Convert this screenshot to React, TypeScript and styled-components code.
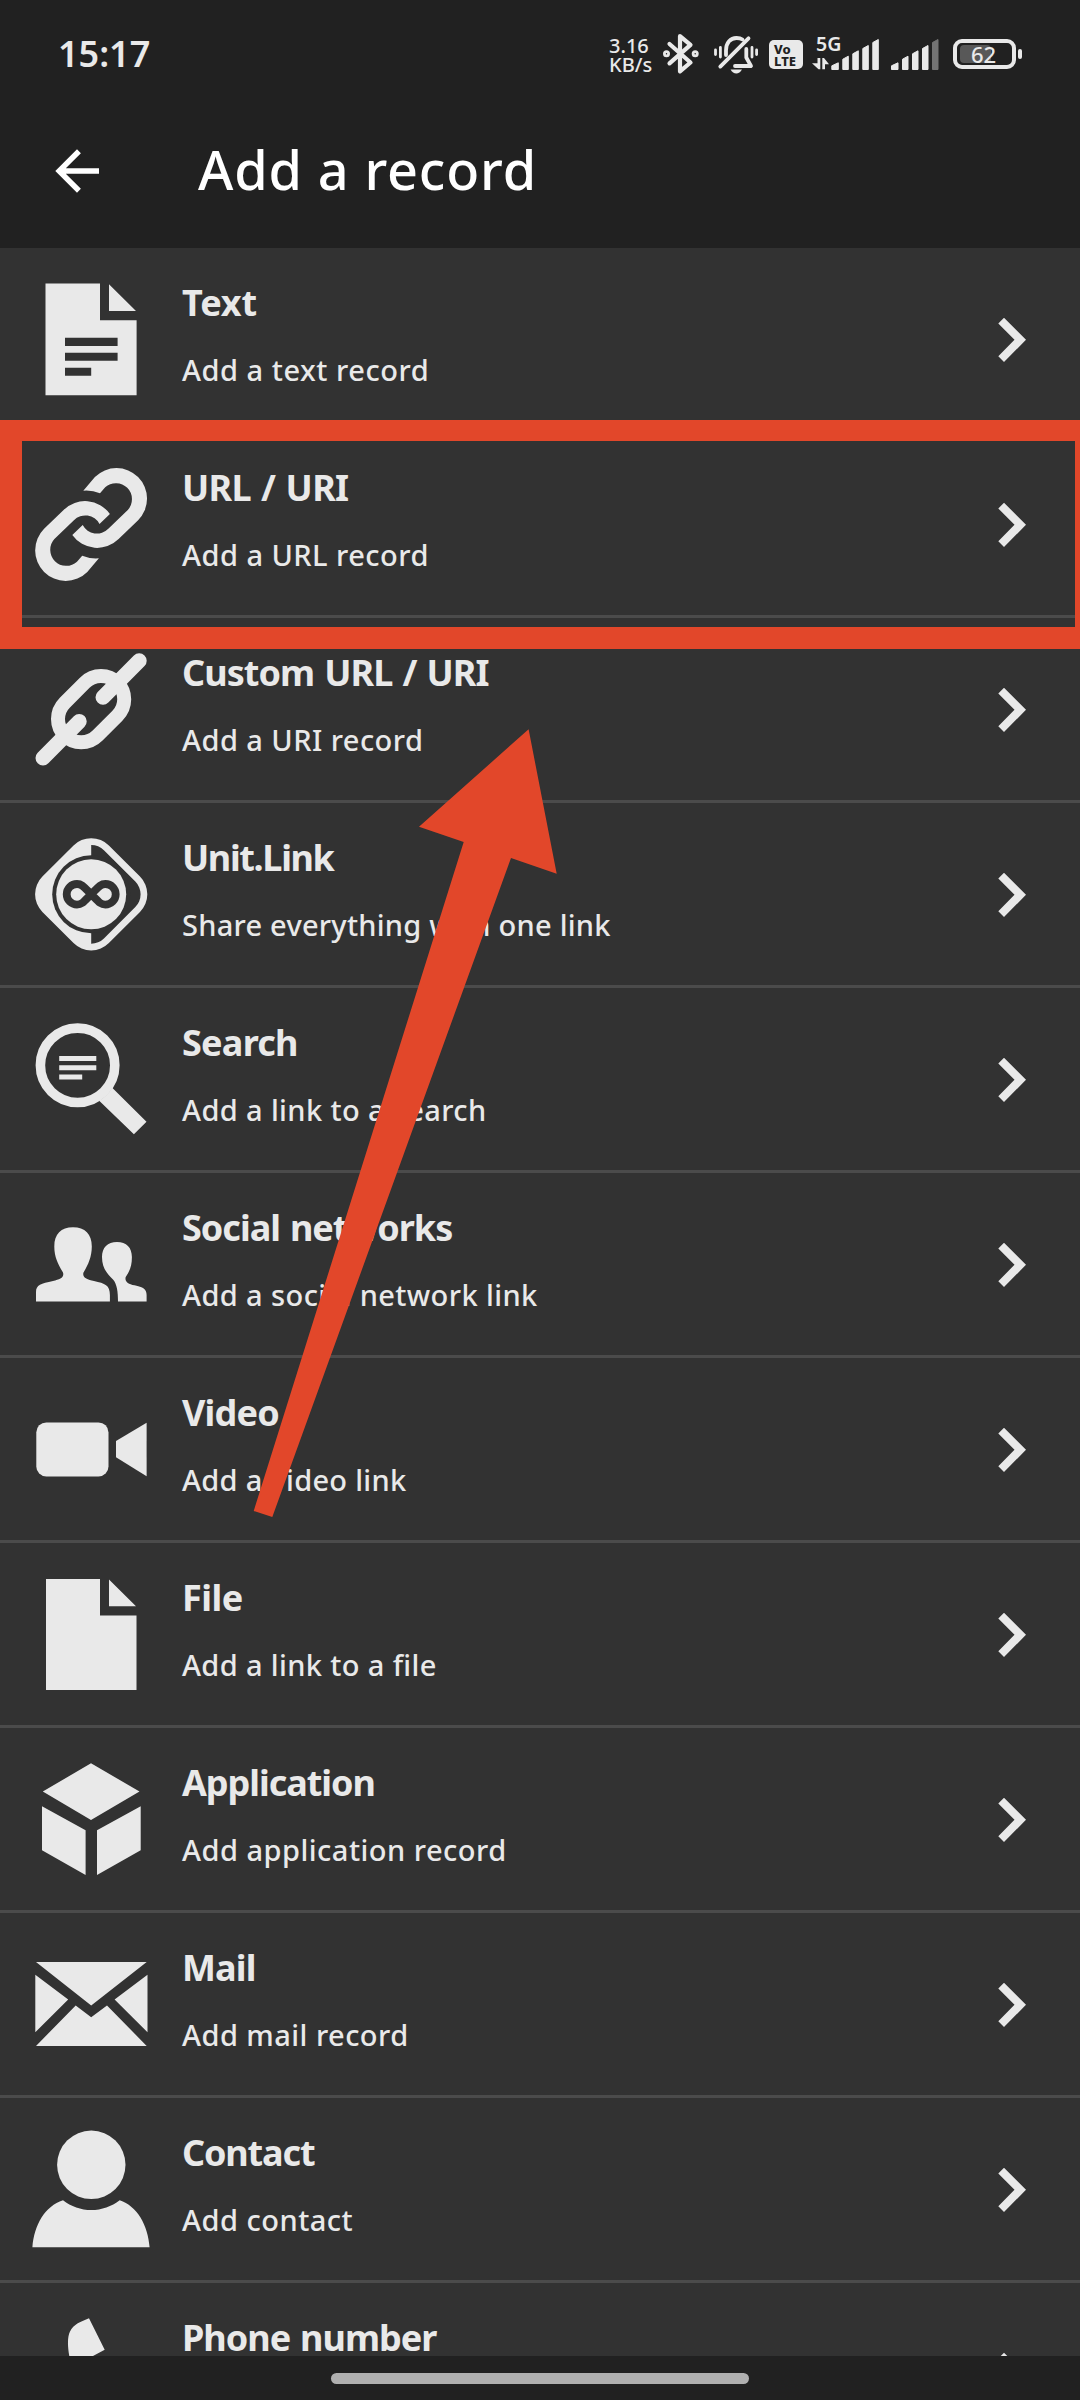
import React from 'react';
import styled, { createGlobalStyle } from 'styled-components';

const INK = '#e9e9e9';
const BAR = '#212121';
const SURFACE = '#323232';
const DIVIDER = '#4b4b4b';
const MARK = '#e2472a';

const Global = createGlobalStyle`
  * { box-sizing: border-box; }
  body { margin: 0; background: ${BAR}; }
`;

const Screen = styled.div`
  position: relative;
  display: flex;
  flex-direction: column;
  width: 1080px;
  height: 2400px;
  overflow: hidden;
  background: ${BAR};
  color: ${INK};
  font-family: 'Noto Sans', sans-serif;
`;

const StatusBar = styled.header`
  display: flex;
  align-items: flex-start;
  justify-content: space-between;
  height: 106px;
  padding: 28px 64px 0 58px;
`;

const Clock = styled.time`
  margin-top: 1px;
  font-size: 36px;
  font-weight: 560;
  line-height: 50px;
`;

const StatusIcons = styled.div`
  display: flex;
  align-items: flex-start;
`;

const NetSpeed = styled.div`
  display: flex;
  flex-direction: column;
  width: 52px;
  margin-top: 9px;
  font-size: 20px;
  font-weight: 500;
  line-height: 18.5px;
`;

const StatusGlyph = styled.svg<{ $w: number; $gap?: number }>`
  display: block;
  flex: none;
  width: ${p => p.$w}px;
  height: 44px;
  margin-top: 4px;
  margin-right: ${p => p.$gap ?? 0}px;
`;

const VolteBadge = styled.div`
  display: flex;
  flex-direction: column;
  align-items: flex-start;
  width: 34px;
  height: 29px;
  margin: 12px 9px 0 10px;
  padding: 3px 0 0 5px;
  border-radius: 5px;
  background: ${INK};
  color: ${BAR};
  font-size: 13px;
  font-weight: 800;
  line-height: 12px;
`;

const Cell = styled.div`
  position: relative;
  width: 68px;
  margin-right: 1px;
`;

const Generation = styled.span`
  position: absolute;
  left: 4px;
  top: 4px;
  font-size: 19.5px;
  font-weight: 600;
  line-height: 24px;
`;

const Battery = styled.div`
  position: relative;
  display: flex;
  align-items: center;
  justify-content: center;
  width: 63px;
  height: 30px;
  margin: 11px 0 0 14px;
  border: 4px solid ${INK};
  border-radius: 9px;

  &::after {
    content: '';
    position: absolute;
    right: -10px;
    top: 6px;
    width: 4px;
    height: 10px;
    border-radius: 2px;
    background: ${INK};
  }
`;

const BatteryLevel = styled.div`
  position: absolute;
  left: 3px;
  top: 2px;
  width: 31px;
  height: 18px;
  border-radius: 4px;
  background: #585858;
`;

const BatteryText = styled.span`
  position: relative;
  margin-right: 2px;
  font-size: 22px;
  font-weight: 500;
  line-height: 22px;
`;

const AppBar = styled.div`
  display: flex;
  align-items: flex-start;
  height: 142px;
  padding: 25px 0 0 51px;
  color: #fff;
`;

const BackIcon = styled.svg`
  width: 52px;
  height: 52px;
  margin: 14px 95px 0 0;
`;

const Title = styled.h1`
  margin: 0;
  font-size: 54px;
  font-weight: 540;
  line-height: 76px;
  letter-spacing: 0.85px;
`;

const List = styled.ul`
  display: flex;
  flex-direction: column;
  height: 2108px;
  margin: 0;
  padding: 0;
  overflow: hidden;
  list-style: none;
  background: ${SURFACE};
`;

const Row = styled.li`
  display: flex;
  flex: none;
  align-items: flex-start;
  height: 185px;
  padding: 30px 52px 0 30px;
  border-bottom: 3px solid ${DIVIDER};
`;

const RowIcon = styled.svg`
  flex: none;
  width: 124px;
  height: 124px;
  margin-right: 28px;
  fill: ${INK};
`;

const RowText = styled.div`
  display: flex;
  flex: 1;
  flex-direction: column;
  gap: 23px;
  padding-top: 1px;
  white-space: nowrap;
`;

const RowTitle = styled.strong<{ $tracking: number }>`
  font-size: 36px;
  font-weight: 680;
  line-height: 48px;
  letter-spacing: ${p => p.$tracking}px;
  word-spacing: 1.6px;
`;

const RowNote = styled.span<{ $tracking: number }>`
  font-size: 29px;
  font-weight: 500;
  line-height: 40px;
  letter-spacing: ${p => p.$tracking}px;
`;

const Chevron = styled.svg`
  flex: none;
  width: 32px;
  height: 48px;
  margin-top: 38px;
  fill: ${INK};
`;

const NavBar = styled.footer`
  display: flex;
  flex: 1;
  justify-content: center;
  padding-top: 17px;
`;

const NavHandle = styled.div`
  width: 418px;
  height: 11px;
  border-radius: 6px;
  background: #b0b0b0;
`;

const Highlight = styled.div`
  position: absolute;
  left: 0;
  top: 420px;
  width: 1080px;
  height: 229px;
  border: solid ${MARK};
  border-width: 21px 5px 22px 22px;
`;

const Pointer = styled.svg`
  position: absolute;
  left: 253px;
  top: 729px;
  width: 305px;
  height: 789px;
  fill: ${MARK};
`;

const SHEET = 'M45.5 35.5H100V72.3H136.6V147.3H45.5ZM109 36.3L136 63H109Z';
const LINK =
  'M83.3 57.7L94.9 44A30.5 30.5 0 0 1 138.1 87.2L118.6 106.1A30.5 30.5 0 0 1 72.3 102L82.7 92A16 16 0 0 0 108.3 95.8L127.8 76.9A16 16 0 0 0 105.2 54.3L100 60.3Q92 57 83.3 57.7Z';

const icons: Record<string, React.ReactNode> = {
  text: (
    <>
      <path d={SHEET} />
      <path fill={SURFACE} d="M65 89.7H117.6V98H65ZM65 104.7H117.6V112.7H65ZM65 119.8H91.2V127.8H65Z" />
    </>
  ),
  link: (
    <>
      <path d={LINK} />
      <path d={LINK} transform="rotate(180 91.1 91.5)" />
    </>
  ),
  chain: (
    <g fill="none" stroke={INK}>
      <rect x="53.9" y="68" width="74.4" height="46.4" rx="23.2" strokeWidth="14" transform="rotate(-45 91.1 91.2)" />
      <path strokeWidth="15" strokeLinecap="round" d="M139.2 42.8L103 79.2M43 140L79.2 103.4" />
    </g>
  ),
  unit: (
    <>
      <rect x="44.2" y="44.3" width="94" height="94" rx="25" transform="rotate(45 91.2 91.3)" />
      <clipPath id="right-half">
        <rect x="91.2" y="30" width="60" height="124" />
      </clipPath>
      <g clipPath="url(#right-half)">
        <rect x="51" y="51.1" width="80.4" height="80.4" rx="18" fill={SURFACE} transform="rotate(45 91.2 91.3)" />
      </g>
      <circle cx="91.2" cy="91.3" r="39" fill={SURFACE} />
      <circle cx="91.2" cy="91.3" r="35" />
      <path
        fill="none"
        stroke={SURFACE}
        strokeWidth="7.8"
        d="M91.2 91.3C84 84 82 81 77 81A10.3 10.3 0 0 0 77 101.6C82 101.6 84 98.6 91.2 91.3C98.4 84 100.4 81 105.4 81A10.3 10.3 0 0 1 105.4 101.6C100.4 101.6 98.4 98.6 91.2 91.3Z"
      />
    </>
  ),
  search: (
    <>
      <circle cx="77.6" cy="77.3" r="37.2" fill="none" stroke={INK} strokeWidth="9.6" />
      <path d="M112.2 99.7L146.5 133.7L133.9 146.3L99.2 112.7Q107 108 112.2 99.7ZM59.2 68H96.3V73H59.2ZM59.2 77.2H96.3V82.2H59.2ZM59.2 86.6H82.2V91.6H59.2Z" />
    </>
  ),
  people: (
    <>
      <path d="M36 128.4V119C36 112 41 110.5 53 108C60 106.5 64.5 104.5 63 99.5C58 91 54.3 84 54.3 73.5C54.3 61 61 54.3 73 54.3C85 54.3 91.8 61 91.8 73.5C91.8 84 88 92 83.5 99.5C82 104.5 87 106.5 94 108C105 110.5 109.9 112 109.9 122V128.4Z" />
      <path d="M118 128.4C118 119 117 111 113 106.5C107 100.5 102 95 102 84C102 74.5 107.5 69 117 69C126.5 69 131.9 74.5 131.9 84C131.9 93 130 97.5 125.7 104C124.5 108.5 128 111 134.5 112.3C143 114 146.6 116 146.6 122V128.4Z" />
    </>
  ),
  video: (
    <>
      <rect x="36.3" y="64.4" width="72.2" height="54" rx="10" />
      <path d="M146.6 64.8V118.2L116 99.2V83Z" />
    </>
  ),
  file: <path d="M46 36H100V72.5H136.5V147H46ZM109 36.5L136 63.3H109Z" />,
  box: (
    <path d="M91 35.3L139.5 63.5L91 92L42.8 63.5ZM42 78.3L85.6 102.3V147L42 122.3ZM97 102.3L140.7 78.3V122.3L97 147Z" />
  ),
  mail: (
    <path d="M36 49H146.7L91.2 92.6ZM35.3 61.8L68.2 86.6L35.3 119.3ZM147.5 61.8L114.6 86.6L147.5 119.3ZM36 133L75.7 92.4L91.2 104.2L107 92.4L146.7 133Z" />
  ),
  contact: (
    <>
      <circle cx="91.3" cy="66.8" r="34.2" />
      <path d="M32.4 149.3C34 127 45 108 63 102.2C71 108.5 81 112 91.3 112C101.6 112 111.6 108.5 119.7 102.2C137 108 148 127 149.6 149.3Z" />
    </>
  ),
  phone: (
    <path d="M89 35.3L104.7 66.7L93 73C90 90 98 110 110 118L121 112L136 139C120 155 100 147 85 122C74 104 69.7 85 69.3 73C67.5 63 67.3 54 70 48.5C73.5 41 81 38.8 89 35.3Z" />
  ),
};

const rows = [
  { icon: 'text', title: 'Text', fit: -0.1, note: 'Add a text record', tracking: 0.53 },
  { icon: 'link', title: 'URL / URI', fit: -0.7, note: 'Add a URL record', tracking: 0.47 },
  { icon: 'chain', title: 'Custom URL / URI', fit: -0.93, note: 'Add a URI record', tracking: 0.45 },
  { icon: 'unit', title: 'Unit.Link', fit: -1.35, note: 'Share everything with one link', tracking: 0.25 },
  { icon: 'search', title: 'Search', fit: -0.75, note: 'Add a link to a search', tracking: 0.38 },
  { icon: 'people', title: 'Social networks', fit: -1, note: 'Add a social network link', tracking: 0.4 },
  { icon: 'video', title: 'Video', fit: -0.8, note: 'Add a video link', tracking: 0.3 },
  { icon: 'file', title: 'File', fit: -0.5, note: 'Add a link to a file', tracking: 0.37 },
  { icon: 'box', title: 'Application', fit: -1.05, note: 'Add application record', tracking: 0.49 },
  { icon: 'mail', title: 'Mail', fit: -0.85, note: 'Add mail record', tracking: 0.46 },
  { icon: 'contact', title: 'Contact', fit: -1.15, note: 'Add contact', tracking: 0.5 },
  { icon: 'phone', title: 'Phone number', fit: -1, note: 'Add phone number', tracking: 0.45 },
];

const barTops = [62.3, 55.7, 50.3, 45, 39];

function SignalBars({ x, full }: { x: number; full: number }) {
  return (
    <>
      {barTops.map((top, i) => {
        const left = i === 0 ? x : x + 1 + i * 10;
        const right = x + 7.5 + i * 10;
        const color = i < full ? INK : '#747474';
        return (
          <path
            key={top}
            fill={color}
            stroke={color}
            strokeLinejoin="round"
            strokeWidth="1"
            d={`M${left + 0.5} 69.5V${top + 3.5}L${right - 0.5} ${top + 0.5}V69.5Z`}
          />
        );
      })}
    </>
  );
}

export default function App() {
  return (
    <Screen>
      <Global />
      <StatusBar>
        <Clock>15:17</Clock>
        <StatusIcons>
          <NetSpeed>
            <span>3.16</span>
            <span>KB/s</span>
          </NetSpeed>
          <StatusGlyph $w={38} $gap={14} viewBox="661 32 38 44" fill="none" stroke={INK} strokeWidth="4.2" strokeLinejoin="round" strokeLinecap="round">
            <path d="M669.5 44L690.5 62.5L680 71.3V36.2L690.5 44.8L669.5 63.3" />
            <circle cx="666.5" cy="53.7" r="1.4" />
            <circle cx="695.2" cy="53.7" r="1.4" />
          </StatusGlyph>
          <StatusGlyph $w={46} viewBox="713 32 46 44" fill="none" stroke={INK} strokeWidth="3.8" strokeLinecap="round" strokeLinejoin="round">
            <path d="M726 55V50.5C726 42.5 730.5 38 736.5 38C739 38 741 38.5 742.5 39.5M746.3 49V57.5L751 66H735" />
            <path d="M720.3 66.6L748.5 38.3" />
            <path strokeWidth="2.8" d="M715.5 50V54.5M720.4 47.5V57M752 47.5V57M756.6 50V54.5" />
            <path fill={INK} stroke="none" d="M730.5 69.5H742C740.5 72.3 738.5 73.4 736.3 73.4C734 73.4 732 72.3 730.5 69.5Z" />
          </StatusGlyph>
          <VolteBadge>
            <span>Vo</span>
            <span>LTE</span>
          </VolteBadge>
          <Cell>
            <Generation>5G</Generation>
            <StatusGlyph $w={68} viewBox="812 32 68 44">
              <SignalBars x={831.3} full={5} />
              <path fill={INK} d="M817.5 58H820.3V69.3H818.5L812 63.3H817.5ZM822.3 58H824L829 64.2H825V69.3H822.3Z" />
            </StatusGlyph>
          </Cell>
          <StatusGlyph $w={58} viewBox="881 32 58 44">
            <SignalBars x={891} full={4} />
          </StatusGlyph>
          <Battery>
            <BatteryLevel />
            <BatteryText>62</BatteryText>
          </Battery>
        </StatusIcons>
      </StatusBar>
      <AppBar>
        <BackIcon viewBox="51 145 52 52" fill="#fff">
          <path d="M99 168.3H65.8L80.9 153.2L77 149.3L55.3 171L77 192.7L80.9 188.8L65.8 173.7H99Z" />
        </BackIcon>
        <Title>Add a record</Title>
      </AppBar>
      <List>
        {rows.map(r => (
          <Row key={r.title}>
            <RowIcon viewBox="30 30 124 124">{icons[r.icon]}</RowIcon>
            <RowText>
              <RowTitle $tracking={r.fit}>{r.title}</RowTitle>
              <RowNote $tracking={r.tracking}>{r.note}</RowNote>
            </RowText>
            <Chevron viewBox="996 68 32 48">
              <path d="M998.3 75.5L1004 69.7L1026 91.8L1004 114L998.3 108.2L1014.5 91.8Z" />
            </Chevron>
          </Row>
        ))}
      </List>
      <NavBar>
        <NavHandle />
      </NavBar>
      <Highlight />
      <Pointer viewBox="253 729 305 789">
        <path d="M528.6 729.3L556.7 873.7L511 858L272.3 1517L253.7 1511L463.7 842L419 826.7Z" />
      </Pointer>
    </Screen>
  );
}
